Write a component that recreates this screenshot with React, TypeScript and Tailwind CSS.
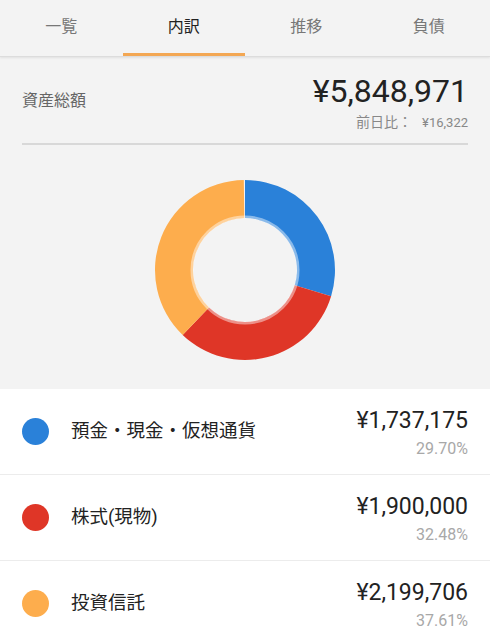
import React from 'react';

const font = { fontFamily: "Roboto, 'Noto Sans CJK JP', sans-serif" };

const tabs = ['一覧', '内訳', '推移', '負債'];

const items = [
  { name: '預金・現金・仮想通貨', amount: '¥1,737,175', pct: 29.7, color: '#2a81d9', dot: 'bg-[#2a81d9]' },
  { name: '株式(現物)', amount: '¥1,900,000', pct: 32.48, color: '#df3627', dot: 'bg-[#df3627]' },
  { name: '投資信託', amount: '¥2,199,706', pct: 37.61, color: '#fdad4d', dot: 'bg-[#fdad4d]' },
];

const arc = (start: number, end: number, ro: number, ri: number, c: number) => {
  const p = (a: number, r: number) => {
    const t = (a * 2 * Math.PI) / 100 - Math.PI / 2;
    return `${(c + r * Math.cos(t)).toFixed(2)} ${(c + r * Math.sin(t)).toFixed(2)}`;
  };
  const large = end - start > 50 ? 1 : 0;
  return `M ${p(start, ro)} A ${ro} ${ro} 0 ${large} 1 ${p(end, ro)} L ${p(end, ri)} A ${ri} ${ri} 0 ${large} 0 ${p(start, ri)} Z`;
};

const Donut = () => {
  let acc = 0;
  return (
    <svg width="184" height="184" viewBox="0 0 184 184">
      {items.map((it) => {
        const s = acc;
        acc += it.pct;
        return <path key={it.name} d={arc(s, Math.min(acc, 99.999), 90, 52, 92)} fill={it.color} />;
      })}
      <circle cx="92" cy="92" r="53" fill="none" stroke="#ffffff" strokeOpacity="0.45" strokeWidth="3" />
    </svg>
  );
};

export default function App() {
  return (
    <div className="w-[490px] h-[640px] overflow-hidden bg-white" style={font}>
      <div className="bg-[#f3f3f3] flex h-[57px] border-b border-[#dcdcdc] shadow-[0_1px_2px_rgba(0,0,0,0.08)] relative z-10">
        {tabs.map((t, i) => (
          <div key={t} className="flex-1 flex flex-col items-center">
            <div className={`flex-1 flex items-center text-[16px] ${i === 1 ? 'text-[#222]' : 'text-[#777]'}`}>{t}</div>
            <div className={`h-[3px] w-full ${i === 1 ? 'bg-[#f3a753]' : 'bg-transparent'}`} />
          </div>
        ))}
      </div>

      <div className="bg-[#f3f3f3] h-[332px] px-[22px] pt-[15px]">
        <div className="flex justify-between items-start border-b-2 border-[#d8d8d8] pb-[10px]">
          <div className="text-[16px] text-[#666] mt-[17px]">資産総額</div>
          <div className="flex flex-col items-end">
            <div className="text-[32px] leading-[38px] text-[#222]">¥5,848,971</div>
            <div className="text-[14px] text-[#888] mt-[2px] flex items-center gap-[10px]">
              <span>前日比：</span>
              <span className="text-[13px]">¥16,322</span>
            </div>
          </div>
        </div>
        <div className="flex justify-center mt-[33px]">
          <Donut />
        </div>
      </div>

      <div>
        {items.map((it) => (
          <div key={it.name} className="h-[86px] flex items-center px-[22px] border-b border-[#ececec]">
            <div className={`w-[27px] h-[27px] rounded-full ${it.dot}`} />
            <div className="ml-[22px] flex-1 text-[18.5px] text-[#222]">{it.name}</div>
            <div className="flex flex-col items-end mt-[2px]">
              <div className="text-[23px] leading-[28px] text-[#222]">{it.amount}</div>
              <div className="text-[16px] leading-[20px] text-[#a8a8a8] mt-[4px]">{it.pct.toFixed(2)}%</div>
            </div>
          </div>
        ))}
      </div>
    </div>
  );
}
